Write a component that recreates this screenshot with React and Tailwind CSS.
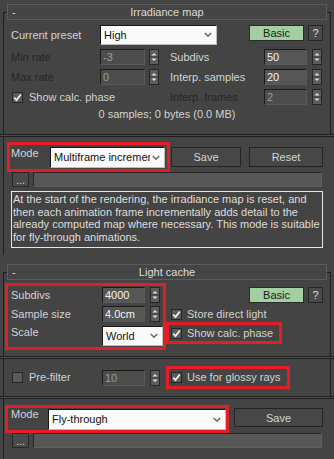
const Header = ({ title }) => (
  <div className="-mt-[9px] ml-[3px] w-[320px] h-[16px] border border-[#5c5c5c] bg-[#444444] grid grid-cols-[20px_1fr_20px] items-center text-[#dcdcdc]">
    <span className="pl-[4px] leading-[12px]">-</span>
    <span className="text-center leading-[12px]">{title}</span>
    <span />
  </div>
);

const Separator = () => (
  <div className="-ml-[4px] w-[335px] h-[3px] border-y border-[#1f1f1f] bg-[#4b4b4b]" />
);

const Spinner = ({ className = '' }) => (
  <div className={`w-[10px] h-[16px] bg-[#5d5d5d] border border-[#262626] flex items-center justify-center ${className}`}>
    <svg width="8" height="14" viewBox="0 0 8 14">
      <path d="M1.5 5.5 L4 3 L6.5 5.5 Z" fill="#e2e2e2" />
      <line x1="0" y1="7" x2="8" y2="7" stroke="#3a3a3a" strokeWidth="1" />
      <path d="M1.5 8.5 L4 11 L6.5 8.5 Z" fill="#e2e2e2" />
    </svg>
  </div>
);

const NumField = ({ value, className = '', dim = false }) => (
  <div
    className={`h-[16px] border border-[#1a1a1a] border-r-[#5a5a5a] border-b-[#5a5a5a] pl-[2px] flex items-center leading-[12px] ${
      dim ? 'bg-[#4d4d4d] text-[#9c9c9c]' : 'bg-[#565656] text-[#f2f2f2]'
    } ${className}`}
  >
    {value}
  </div>
);

const Dropdown = ({ text, className = '' }) => (
  <div className={`flex items-center justify-between bg-[#fafafa] border border-[#151515] border-r-[#bdbdbd] border-b-[#bdbdbd] pl-[3px] pr-[4px] text-[#111111] ${className}`}>
    <span className="overflow-hidden whitespace-nowrap leading-[13px]">{text}</span>
    <svg width="8" height="6" viewBox="0 0 8 6" className="shrink-0 ml-[2px]">
      <polyline points="0.8,1 4,4.2 7.2,1" fill="none" stroke="#6a6a6a" strokeWidth="1.6" />
    </svg>
  </div>
);

const Check = ({ checked = true }) => (
  <div className="w-[11px] h-[11px] shrink-0 bg-[#5a5a5a] border border-[#262626] flex items-center justify-center">
    {checked && (
      <svg width="9" height="9" viewBox="0 0 9 9">
        <polyline points="1.2,4.5 3.5,7 7.8,1.5" fill="none" stroke="#f0f0f0" strokeWidth="1.8" />
      </svg>
    )}
  </div>
);

const Button = ({ children, className = '' }) => (
  <div className={`flex items-center justify-center bg-[#474747] border border-[#242424] text-[#d4d4d4] leading-[12px] ${className}`}>
    {children}
  </div>
);

const BasicRow = ({ className = '' }) => (
  <div className={`flex ${className}`}>
    <div className="w-[55px] h-[16px] bg-[#a4cfa1] border border-[#2a2a2a] flex items-center justify-center text-[#1c1c1c] leading-[12px]">
      Basic
    </div>
    <div className="ml-[4px] w-[15px] h-[16px] bg-[#4a4a4a] border border-[#262626] flex items-center justify-center text-[#dcdcdc] leading-[12px]">
      ?
    </div>
  </div>
);

const DotsRow = () => (
  <div className="flex items-center">
    <div className="ml-[8px] w-[17px] h-[15px] bg-[#4a4a4a] border border-[#262626] flex items-end justify-center text-[#d8d8d8] leading-[10px] pb-[1px]">
      ...
    </div>
    <div className="ml-[4px] w-[289px] h-[15px] bg-[#575757] border border-[#262626] border-r-[#5e5e5e] border-b-[#5e5e5e]" />
  </div>
);

const RED = 'border-[3px] border-[#e41e26]';

export default function App() {
  return (
    <div className="w-[334px] h-[459px] overflow-hidden bg-[#444444] pt-[12px] text-[11px] leading-[13px] text-[#d3d3d3] font-['Liberation_Sans',Arial,sans-serif]">
      {/* Irradiance map rollout */}
      <div className="ml-[3px] w-[328px] border-l border-[#1f1f1f] pb-[7px]">
        <div className="border-t border-r border-[#1f1f1f] pb-[13px]">
          <Header title="Irradiance map" />

          <div className="mt-[5px] flex items-center h-[20px]">
            <span className="w-[96px] pl-[7px]">Current preset</span>
            <Dropdown text="High" className="w-[117px] h-[20px]" />
            <BasicRow className="ml-[32px] self-start" />
          </div>

          <div className="mt-[4px] flex items-center h-[16px]">
            <div className="w-[162px] flex items-center">
              <span className="w-[96px] pl-[7px] text-[#262626]">Min rate</span>
              <NumField value="-3" dim className="w-[45px]" />
              <Spinner className="ml-[4px]" />
            </div>
            <div className="flex items-center">
              <span className="w-[98px] pl-[4px]">Subdivs</span>
              <NumField value="50" className="w-[43px]" />
              <Spinner className="ml-[5px]" />
            </div>
          </div>

          <div className="mt-[4px] flex items-center h-[16px]">
            <div className="w-[162px] flex items-center">
              <span className="w-[96px] pl-[7px] text-[#262626]">Max rate</span>
              <NumField value="0" dim className="w-[45px]" />
              <Spinner className="ml-[4px]" />
            </div>
            <div className="flex items-center">
              <span className="w-[98px] pl-[4px]">Interp. samples</span>
              <NumField value="20" className="w-[43px]" />
              <Spinner className="ml-[5px]" />
            </div>
          </div>

          <div className="mt-[4px] flex items-center h-[16px]">
            <div className="w-[162px] flex items-center pl-[8px]">
              <Check />
              <span className="ml-[6px]">Show calc. phase</span>
            </div>
            <div className="flex items-center">
              <span className="w-[98px] pl-[4px] text-[#262626]">Interp. frames</span>
              <NumField value="2" dim className="w-[43px]" />
              <Spinner className="ml-[5px]" />
            </div>
          </div>

          <div className="mt-[3px] text-center">0 samples; 0 bytes (0.0 MB)</div>
        </div>

        <Separator />

        <div className="mt-[5px] flex items-start">
          <div className={`ml-[3px] w-[163px] h-[30px] ${RED} flex items-start`}>
            <span className="w-[40px] pl-[1px] pt-[2px]">Mode</span>
            <Dropdown text="Multiframe incremer" className="mt-[2px] w-[115px] h-[21px]" />
          </div>
          <Button className="ml-[1px] mt-[5px] w-[70px] h-[20px]">Save</Button>
          <Button className="ml-[8px] mt-[5px] w-[74px] h-[20px]">Reset</Button>
        </div>

        <DotsRow />

        <div className="mt-[4px] ml-[7px] w-[312px] h-[57px] border border-[#e6e6e6] px-[1px] pt-[1px] leading-[12.5px] text-[#dedede]">
          At the start of the rendering, the irradiance map is reset, and then each animation frame incrementally adds detail to the already computed map where necessary. This mode is suitable for fly-through animations.
        </div>
      </div>

      {/* Light cache rollout */}
      <div className="mt-[17px] ml-[3px] w-[328px] border-l border-[#1f1f1f] pb-[20px]">
        <div className="border-t border-r border-[#1f1f1f] pb-[6px]">
          <Header title="Light cache" />

          <div className="mt-[3px] flex items-start">
            <div className={`ml-[1px] w-[161px] h-[67px] ${RED} flex flex-col`}>
              <div className="mt-[1px] flex items-center h-[16px]">
                <span className="w-[94px] pl-[3px]">Subdivs</span>
                <NumField value="4000" className="w-[43px]" />
                <Spinner className="ml-[5px]" />
              </div>
              <div className="mt-[3px] flex items-center h-[16px]">
                <span className="w-[94px] pl-[3px]">Sample size</span>
                <NumField value="4.0cm" className="w-[43px]" />
                <Spinner className="ml-[5px]" />
              </div>
              <div className="mt-[4px] flex items-start h-[20px]">
                <span className="w-[94px] pl-[3px]">Scale</span>
                <Dropdown text="World" className="w-[61px] h-[20px]" />
              </div>
            </div>

            <div className="flex flex-col">
              <BasicRow className="mt-[4px] ml-[83px]" />
              <div className="mt-[4px] h-[14px] pl-[5px] flex items-center">
                <Check />
                <span className="ml-[5px]">Store direct light</span>
              </div>
              <div className={`mt-[1px] w-[116px] h-[22px] ${RED} pl-[2px] flex items-center`}>
                <Check />
                <span className="ml-[5px]">Show calc. phase</span>
              </div>
            </div>
          </div>
        </div>

        <Separator />

        <div className="border-r border-[#1f1f1f] pt-[7px] pb-[7px] flex items-center">
          <div className="ml-[8px]">
            <Check checked={false} />
          </div>
          <span className="ml-[6px] w-[73px]">Pre-filter</span>
          <NumField value="10" dim className="w-[43px]" />
          <Spinner className="ml-[5px]" />
          <div className={`ml-[6px] w-[124px] h-[23px] ${RED} pl-[2px] flex items-center`}>
            <Check />
            <span className="ml-[5px]">Use for glossy rays</span>
          </div>
        </div>

        <Separator />

        <div className="mt-[6px] flex items-start">
          <div className={`ml-[1px] w-[224px] h-[28px] ${RED} flex items-start`}>
            <span className="w-[40px] pl-[3px]">Mode</span>
            <Dropdown text="Fly-through" className="mt-[1px] w-[178px] h-[21px]" />
          </div>
          <Button className="ml-[5px] mt-[3px] w-[89px] h-[19px]">Save</Button>
        </div>

        <DotsRow />
      </div>
    </div>
  );
}
